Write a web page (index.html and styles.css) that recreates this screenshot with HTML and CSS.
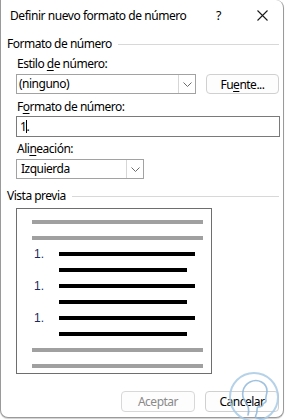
FILE: index.html
```html
<!DOCTYPE html>
<html lang="es">
<head>
<meta charset="utf-8">
<title>Definir nuevo formato de número</title>
<link rel="stylesheet" href="styles.css">
</head>
<body>
<div class="dialog">
  <div class="titlebar">
    <span class="title">Definir nuevo formato de número</span>
    <span class="help">?</span>
    <svg class="close" width="11" height="11" viewBox="0 0 11 11"><path d="M0.5 0.5L10.5 10.5M10.5 0.5L0.5 10.5" stroke="#1a1a1a" stroke-width="1.1" fill="none"/></svg>
  </div>

  <div class="group-head g1"><span>Formato de número</span><i class="rule"></i></div>

  <div class="label l1">Estilo <u>d</u>e número:</div>
  <div class="row r1">
    <div class="combo wide"><span class="val">(ninguno)</span><span class="arrow"><svg width="9" height="5" viewBox="0 0 9 5"><path d="M0.5 0.5L4.5 4.5L8.5 0.5" stroke="#6b6b6b" fill="none"/></svg></span></div>
    <div class="btn fuente">Fu<u>e</u>nte...</div>
  </div>

  <div class="label l2">F<u>o</u>rmato de número:</div>
  <div class="input"><span>1</span><i class="caret"></i><span>.</span></div>

  <div class="label l3">Ali<u>n</u>eación:</div>
  <div class="combo narrow"><span class="val">Izquierda</span><span class="arrow"><svg width="9" height="5" viewBox="0 0 9 5"><path d="M0.5 0.5L4.5 4.5L8.5 0.5" stroke="#6b6b6b" fill="none"/></svg></span></div>

  <div class="group-head g2"><span>Vista previa</span><i class="rule"></i></div>

  <div class="preview">
    <div class="pl gray"></div>
    <div class="pl gray"></div>
    <div class="item"><span class="num">1.</span><div class="pl black long"></div></div>
    <div class="pl black short"></div>
    <div class="item"><span class="num">1.</span><div class="pl black long"></div></div>
    <div class="pl black short"></div>
    <div class="item"><span class="num">1.</span><div class="pl black long"></div></div>
    <div class="pl black short"></div>
    <div class="pl gray"></div>
    <div class="pl gray"></div>
  </div>

  <div class="buttons">
    <div class="btn disabled">Aceptar</div>
    <div class="btn">Cancelar</div>
  </div>

  <svg class="watermark" width="56" height="56" viewBox="0 0 56 56">
    <circle cx="28" cy="28" r="24" fill="none" stroke="#a9cbe6" stroke-width="2"/>
    <path d="M22 46 C24 40 22 36 19 32 C15 27 16 17 24 13 C32 9 41 14 41 22 C41 26 39 28 40 31 C41 33 38 34 37 35 C37 38 34 38 32 38 C30 39 32 43 30 46 C28 49 33 50 36 49" fill="none" stroke="#8fb8dc" stroke-width="1.6" stroke-linecap="round"/>
  </svg>
</div>
</body>
</html>
```

FILE: styles.css
```css
html, body {
  margin: 0;
  padding: 0;
}
body {
  width: 287px;
  height: 420px;
  background: #ffffff;
  font-family: "Noto Sans", "Open Sans", sans-serif;
  font-size: 12px;
  letter-spacing: -0.5px;
  color: #000;
  overflow: hidden;
}
.dialog {
  position: relative;
  width: 284px;
  height: 418px;
  box-sizing: border-box;
  border: 1px solid #9a9a9a;
  border-top: none;
  border-radius: 0 8px 8px 8px;
  background: #fff;
  box-shadow: 0 1px 1px #d0d0d0;
}
.titlebar {
  height: 30px;
  display: flex;
  align-items: center;
  padding-left: 9px;
}
.title {
  flex: 1;
  letter-spacing: -0.45px;
}
.help {
  width: 10px;
  margin-right: 31px;
  font-size: 12.5px;
}
.close {
  margin-right: 15px;
}
.group-head {
  display: flex;
  align-items: center;
  height: 16px;
  line-height: 16px;
  margin-left: 6px;
  margin-right: 4px;
}
.group-head .rule {
  flex: 1;
  height: 0;
  border-top: 1px solid #d8d8d8;
  margin-left: 6px;
  margin-top: 1px;
}
.g1 { margin-top: 6px; }
.g2 { margin-top: 9px; }
.label {
  height: 16px;
  line-height: 16px;
  margin-left: 16px;
}
.l1 { margin-top: 4px; }
.l2 { margin-top: 5px; }
.l3 { margin-top: 4px; }
u {
  text-decoration-thickness: 1px;
  text-underline-offset: 2px;
}
.row {
  display: flex;
  margin-left: 15px;
  margin-top: 2px;
  gap: 10px;
}
.combo {
  box-sizing: border-box;
  height: 20px;
  border: 1px solid #a2a2a2;
  display: flex;
  align-items: center;
}
.combo .val {
  flex: 1;
  padding-left: 2px;
  line-height: 18px;
}
.combo .arrow {
  width: 16px;
  height: 18px;
  border-left: 1px solid #d6d6d6;
  display: flex;
  align-items: center;
  justify-content: center;
}
.wide { width: 180px; }
.narrow {
  width: 128px;
  margin-left: 15px;
  margin-top: 2px;
}
.narrow .val { padding-left: 4px; }
.btn {
  box-sizing: border-box;
  width: 73px;
  height: 20px;
  border: 1px solid #d0d0d0;
  border-radius: 4px;
  display: flex;
  align-items: center;
  justify-content: center;
  background: #fdfdfd;
}
.input {
  box-sizing: border-box;
  height: 21px;
  width: 264px;
  margin-left: 15px;
  margin-top: 1px;
  border: 1px solid #7a7a7a;
  display: flex;
  align-items: center;
  padding-left: 3px;
}
.caret {
  width: 1px;
  height: 13px;
  background: #000;
  margin-left: 0;
  margin-right: -1px;
}
.preview {
  box-sizing: border-box;
  width: 196px;
  height: 166px;
  margin-left: 15px;
  margin-top: 4px;
  border: 1px solid #6e6e6e;
  padding: 11px 0 0 15px;
  display: flex;
  flex-direction: column;
  gap: 12px;
}
.pl {
  height: 4px;
  flex: none;
}
.gray {
  width: 171px;
  background: #a0a0a0;
}
.black { background: #000; }
.long { width: 136px; }
.short { width: 128px; margin-left: 27px; }
.item {
  display: flex;
  align-items: center;
  height: 4px;
}
.num {
  width: 27px;
  font-family: "Liberation Sans", sans-serif;
  font-size: 12px;
  letter-spacing: 0;
  color: #1a2a5a;
  margin-left: 2px;
  margin-right: -2px;
  line-height: 4px;
}
.buttons {
  display: flex;
  justify-content: flex-end;
  gap: 10px;
  margin-top: 17px;
  margin-right: 4px;
}
.buttons .btn {
  height: 21px;
  width: 74px;
}
.disabled {
  color: #8a8a8a;
  border-color: #d8d8d8;
}
.watermark {
  position: absolute;
  left: 225px;
  top: 369px;
  opacity: 0.85;
}
```
